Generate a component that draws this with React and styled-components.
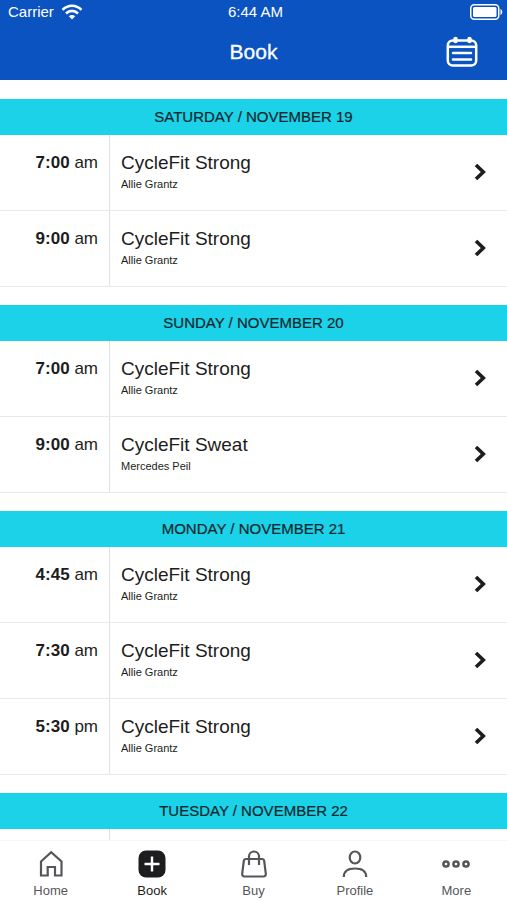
import React, { useState } from 'react'
import styled, { createGlobalStyle } from 'styled-components'

const GlobalStyle = createGlobalStyle`
    * {
        box-sizing: border-box;
    }
    body {
        margin: 0;
        background: #fff;
        color: #1d1d20;
        font-family: 'Liberation Sans', Arial, sans-serif;
    }
`

const Screen = styled.div`
    display: flex;
    flex-direction: column;
    height: 100vh;
    overflow: hidden;
`

const Header = styled.header`
    flex: none;
    background: #0b53c0;
    color: #fff;
`

const StatusBar = styled.div`
    display: grid;
    grid-template-columns: 1fr auto 1fr;
    align-items: center;
    height: 24px;
    padding: 0 4px 0 8px;
    font-size: 15px;
    line-height: 24px;
`

const Carrier = styled.div`
    display: flex;
    align-items: center;
    gap: 7px;
`

const Battery = styled.svg`
    justify-self: end;
`

const TitleBar = styled.div`
    display: grid;
    grid-template-columns: 1fr auto 1fr;
    align-items: center;
    height: 56px;
    padding: 0 29px;
`

const Title = styled.h1`
    grid-column: 2;
    margin: 0;
    font-size: 21px;
    font-weight: 400;
    line-height: 24px;
    -webkit-text-stroke: 0.3px #fff;
`

const IconButton = styled.button`
    display: flex;
    justify-self: end;
    padding: 0;
    border: 0;
    background: none;
    color: inherit;
    cursor: pointer;
`

const Schedule = styled.main`
    flex: 1;
    min-height: 0;
    overflow-y: auto;
    scrollbar-width: none;
    padding-top: 19px;
`

const Day = styled.section`
    margin-bottom: 18px;
`

const DayTitle = styled.h2`
    margin: 0;
    background: #1bd2e8;
    font-size: 15px;
    font-weight: 400;
    line-height: 36px;
    text-align: center;
    color: #10262c;
    -webkit-text-stroke: 0.2px #10262c;
`

const List = styled.ul`
    margin: 0;
    padding: 0;
    list-style: none;
`

const Row = styled.a`
    display: flex;
    height: 76px;
    border-bottom: 1px solid #e8eaec;
    color: inherit;
    text-decoration: none;
`

const Time = styled.div`
    flex: none;
    width: 110px;
    padding: 16px 11px 0 0;
    border-right: 1px solid #dfe2e4;
    font-size: 17px;
    line-height: 23px;
    text-align: right;
`

const Info = styled.div`
    display: flex;
    flex: 1;
    flex-direction: column;
    gap: 2px;
    padding: 16px 0 0 11px;
`

const Name = styled.span`
    font-size: 19px;
    line-height: 23px;
`

const Coach = styled.span`
    font-size: 11px;
    line-height: 16px;
`

const Chevron = styled.svg`
    flex: none;
    margin: 28px 20px 0 0;
`

const TabBar = styled.nav`
    display: flex;
    flex: none;
    height: 60px;
    border-top: 1px solid #f4f4f4;
    background: #fff;
`

const Tab = styled.button`
    display: flex;
    flex: 1;
    flex-direction: column;
    align-items: center;
    gap: 4px;
    padding: 9px 0 0;
    border: 0;
    background: none;
    color: ${(props) => (props.$active ? '#1d1d20' : '#55565a')};
    font-family: inherit;
    font-size: 13px;
    line-height: 18px;
    cursor: pointer;
`

const days = [
    {
        title: 'SATURDAY / NOVEMBER 19',
        classes: [
            { time: '7:00', half: 'am', name: 'CycleFit Strong', coach: 'Allie Grantz' },
            { time: '9:00', half: 'am', name: 'CycleFit Strong', coach: 'Allie Grantz' },
        ],
    },
    {
        title: 'SUNDAY / NOVEMBER 20',
        classes: [
            { time: '7:00', half: 'am', name: 'CycleFit Strong', coach: 'Allie Grantz' },
            { time: '9:00', half: 'am', name: 'CycleFit Sweat', coach: 'Mercedes Peil' },
        ],
    },
    {
        title: 'MONDAY / NOVEMBER 21',
        classes: [
            { time: '4:45', half: 'am', name: 'CycleFit Strong', coach: 'Allie Grantz' },
            { time: '7:30', half: 'am', name: 'CycleFit Strong', coach: 'Allie Grantz' },
            { time: '5:30', half: 'pm', name: 'CycleFit Strong', coach: 'Allie Grantz' },
        ],
    },
    { title: 'TUESDAY / NOVEMBER 22', classes: [] },
]

const tabs = [
    {
        label: 'Home',
        icon: (
            <path d="M4 11.500 14.200 2.200 24.500 11.500V25.500H18V17H10.700V25.500H4Z" />
        ),
    },
    {
        label: 'Book',
        icon: (
            <>
                <rect x="0.500" y="0.500" width="27" height="27" rx="7.500" fill="currentColor" stroke="none" />
                <path d="M14 6.500V21.500M6.500 14H21.500" stroke="#fff" strokeWidth="2.400" />
            </>
        ),
    },
    {
        label: 'Buy',
        icon: (
            <>
                <path d="M6 9H22C23.300 9 24 9.600 24.200 11L25.800 23.500C26 25.500 25 26.500 23.500 26.500H4.500C3 26.500 2 25.500 2.200 23.500L3.800 11C4 9.600 4.700 9 6 9Z" />
                <path d="M9 15V6.500A5 5 0 0 1 19 6.500V15" />
            </>
        ),
    },
    {
        label: 'Profile',
        icon: (
            <>
                <ellipse cx="14" cy="7.500" rx="5.300" ry="6" />
                <path d="M2.800 27C2.800 21.500 7 18.500 14 18.500S25.200 21.500 25.200 27" />
            </>
        ),
    },
    {
        label: 'More',
        icon: (
            <g strokeWidth="2.500">
                <circle cx="4" cy="14" r="2.600" />
                <circle cx="14" cy="14" r="2.600" />
                <circle cx="24" cy="14" r="2.600" />
            </g>
        ),
    },
]

function TopBar() {
    return (
        <Header>
            <StatusBar>
                <Carrier>
                    Carrier
                    <svg width="22" height="16" viewBox="0 0 22 16" fill="none" stroke="#fff" strokeWidth="2.600">
                        <path d="M1.500 5.800C7 0.300 15 0.300 20.500 5.800" />
                        <path d="M5 9.500C8.500 6 13.500 6 17 9.500" />
                        <path d="M11 15.500 7.800 12.200C9.600 10.600 12.400 10.600 14.200 12.200Z" fill="#fff" stroke="none" />
                    </svg>
                </Carrier>
                <span>6:44 AM</span>
                <Battery width="33" height="16" viewBox="0 0 33 16">
                    <rect x="0.750" y="0.750" width="28" height="14.500" rx="3.500" fill="none" stroke="#fff" strokeWidth="1.500" />
                    <rect x="3" y="3" width="23.500" height="10" rx="1.500" fill="#fff" />
                    <path d="M30.500 5C32.800 6 32.800 10 30.500 11Z" fill="#fff" />
                </Battery>
            </StatusBar>
            <TitleBar>
                <Title>Book</Title>
                <IconButton type="button" aria-label="Choose a date">
                    <svg width="32" height="32" viewBox="0 0 32 32" fill="none" stroke="currentColor" strokeWidth="2.500" strokeLinecap="round">
                        <rect x="1.800" y="4.500" width="28.400" height="25" rx="5" />
                        <path d="M2 10.800H30" strokeLinecap="butt" />
                        <path d="M9.500 3V5M23.500 3V5" strokeWidth="4.500" />
                        <path d="M7 17H25M7 23.500H25" />
                    </svg>
                </IconButton>
            </TitleBar>
        </Header>
    )
}

function ClassRow({ item }) {
    return (
        <li>
            <Row href="#class">
                <Time>
                    <b>{item.time}</b> {item.half}
                </Time>
                <Info>
                    <Name>{item.name}</Name>
                    <Coach>{item.coach}</Coach>
                </Info>
                <Chevron width="13" height="18" viewBox="0 0 13 18" fill="none" stroke="currentColor" strokeWidth="3.600">
                    <path d="M2 2 9.300 9 2 16" />
                </Chevron>
            </Row>
        </li>
    )
}

function App() {
    const [active, setActive] = useState('Book')

    return (
        <>
            <GlobalStyle />
            <Screen>
                <TopBar />
                <Schedule>
                    {days.map((day) => (
                        <Day key={day.title}>
                            <DayTitle>{day.title}</DayTitle>
                            <List>
                                {day.classes.map((item) => (
                                    <ClassRow key={item.time} item={item} />
                                ))}
                            </List>
                            {day.classes.length === 0 && (
                                <Row as="div">
                                    <Time />
                                </Row>
                            )}
                        </Day>
                    ))}
                </Schedule>
                <TabBar>
                    {tabs.map((tab) => (
                        <Tab
                            key={tab.label}
                            type="button"
                            $active={tab.label === active}
                            onClick={() => setActive(tab.label)}
                        >
                            <svg width="28" height="28" viewBox="0 0 28 28" fill="none" stroke="currentColor" strokeWidth="2.200">
                                {tab.icon}
                            </svg>
                            {tab.label}
                        </Tab>
                    ))}
                </TabBar>
            </Screen>
        </>
    )
}

export default App
